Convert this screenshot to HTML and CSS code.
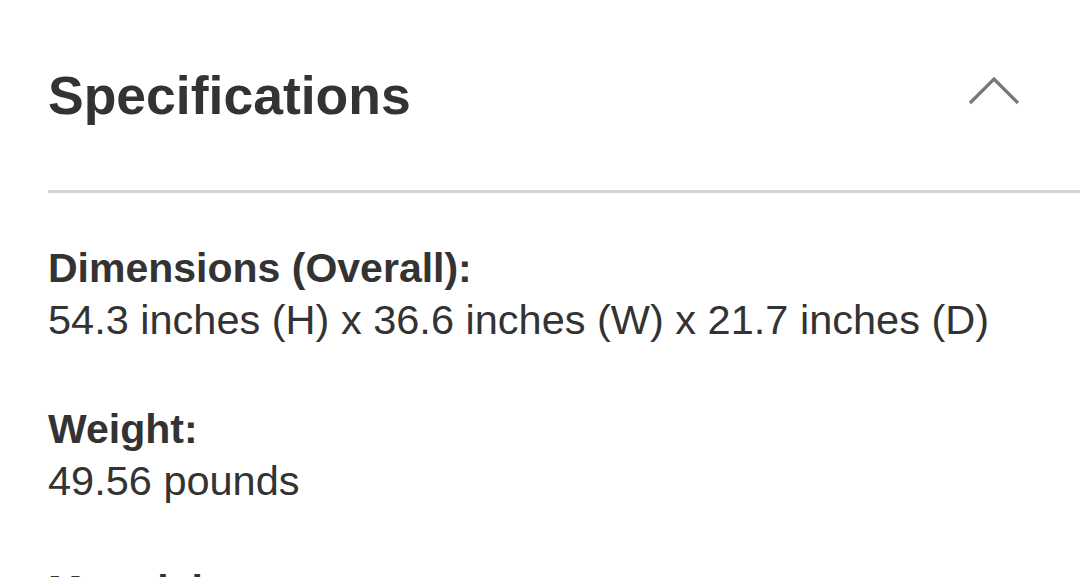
FILE: index.html
```html
<!DOCTYPE html>
<html lang="en">
<head>
<meta charset="utf-8">
<title>Specifications</title>
<link rel="stylesheet" href="styles.css">
</head>
<body>
<section class="specs">
  <div class="specs-header">
    <h2 class="specs-title">Specifications</h2>
    <button class="toggle" aria-label="Collapse">
      <svg width="52" height="30" viewBox="0 0 52 30">
        <polyline points="2,27 26,3 50,27" fill="none" stroke="#777" stroke-width="3.2"/>
      </svg>
    </button>
  </div>
  <div class="divider"></div>
  <dl class="spec-list">
    <div class="spec">
      <dt>Dimensions (Overall):</dt>
      <dd>54.3 inches (H) x 36.6 inches (W) x 21.7 inches (D)</dd>
    </div>
    <div class="spec">
      <dt>Weight:</dt>
      <dd>49.56 pounds</dd>
    </div>
    <div class="spec">
      <dt>Materials:</dt>
      <dd>Wood</dd>
    </div>
  </dl>
</section>
</body>
</html>
```

FILE: styles.css
```css
html, body {
  margin: 0;
  padding: 0;
  background: #ffffff;
  overflow: hidden;
}

body {
  font-family: "Liberation Sans", Arial, Helvetica, sans-serif;
  color: #333333;
}

.specs {
  padding-left: 48px;
  padding-top: 65px;
}

.specs-header {
  display: flex;
  align-items: flex-start;
  justify-content: space-between;
  padding-right: 60px;
  padding-bottom: 63px;
}

.specs-title {
  margin: 0;
  font-size: 53.5px;
  line-height: 62px;
  font-weight: bold;
  color: #333333;
}

.toggle {
  border: 0;
  background: none;
  padding: 0;
  margin-top: 11px;
  display: block;
  line-height: 0;
}

.divider {
  height: 3px;
  background: #d5d5d5;
}

.spec-list {
  margin: 0;
  padding-top: 49px;
  display: flex;
  flex-direction: column;
  gap: 57px;
}

.spec dt,
.spec dd {
  margin: 0;
  font-size: 41px;
  line-height: 52px;
}

.spec dt {
  font-weight: bold;
}

.spec dd {
  font-weight: normal;
  font-size: 41.5px;
}
```
